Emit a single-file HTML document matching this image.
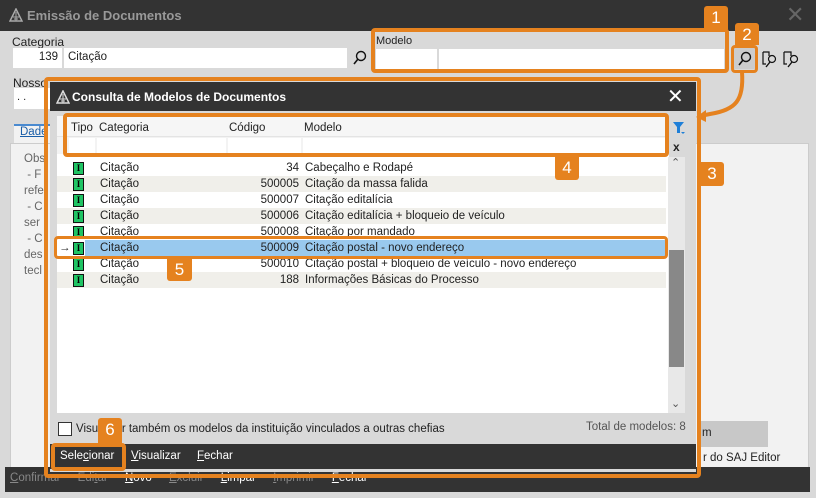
<!DOCTYPE html>
<html><head><meta charset="utf-8"><style>
*{box-sizing:border-box;margin:0;padding:0}
body{width:816px;height:498px;overflow:hidden;background:#d9d9d9;font-family:"Liberation Sans",sans-serif;font-size:11.5px;color:#222;position:relative}
.a{position:absolute}
.dark{background:#333}
.inp{background:#fff;position:absolute}
.or{position:absolute;border:4px solid #e5821f;border-radius:4px}
.badge{position:absolute;background:#e5821f;color:#fff;font-size:17px;text-align:center;border-radius:3px 3px 0 0;line-height:24px}
.row{position:absolute;left:57px;width:609px;height:16px;font-size:11.5px;line-height:16px}
.row span{position:absolute}
.ic{position:absolute;left:16px;top:2px;width:11px;height:13px;background:#1fc464;border:1px solid #111;font:bold 9px "Liberation Serif",serif;color:#000;text-align:center;line-height:11px}
.gtxt{color:#666}
</style></head><body>
<!-- main window -->
<div class="a dark" style="left:0;top:0;width:816px;height:31px"></div>
<svg class="a" style="left:9px;top:8px" width="14" height="14" viewBox="0 0 14 14"><path d="M7 1L1 13H13Z" fill="none" stroke="#aaa" stroke-width="1.5"/><path d="M4 9H10M5 11H9M7 4V13" stroke="#aaa"/></svg>
<div class="a" style="left:27px;top:8px;color:#999;font-size:13px;font-weight:bold">Emissão de Documentos</div>
<div class="a" style="left:786px;top:2px;color:#666;font-size:22px">✕</div>
<div class="a" style="left:12px;top:35px;font-size:12px">Categoria</div>
<div class="inp" style="left:13px;top:48px;width:49px;height:20px;text-align:right;padding:3px 4px">139</div>
<div class="inp" style="left:64px;top:48px;width:283px;height:20px;padding:3px 4px">Citação</div>
<svg class="a" style="left:352px;top:50px" width="16" height="16"><circle cx="9" cy="6" r="4.5" fill="none" stroke="#111" stroke-width="1.4"/><path d="M6 9L2 14" stroke="#111" stroke-width="1.6"/></svg>
<div class="a" style="left:376px;top:35px;font-size:11px">Modelo</div>
<div class="inp" style="left:376px;top:49px;width:61px;height:20px"></div>
<div class="inp" style="left:439px;top:49px;width:285px;height:20px"></div>
<div class="or" style="left:371px;top:28px;width:358px;height:45px"></div>
<div class="a" style="left:734px;top:48px;width:21px;height:21px;background:#ccc"></div>
<svg class="a" style="left:737px;top:51px" width="16" height="16"><circle cx="9" cy="6" r="4.5" fill="none" stroke="#111" stroke-width="1.4"/><path d="M6 9L2 14" stroke="#111" stroke-width="1.6"/></svg>
<div class="or" style="left:731px;top:45px;width:27px;height:28px;border-width:3px"></div>
<svg class="a" style="left:760px;top:48px" width="48" height="22"><path d="M3 4H9V8M3 4V16H6" fill="none" stroke="#111" stroke-width="1.2"/><circle cx="12" cy="11" r="3.5" fill="none" stroke="#111" stroke-width="1.2"/><path d="M10 14L6 19" stroke="#111" stroke-width="1.4"/><path d="M24 4H31V8M24 4V16H27" fill="none" stroke="#111" stroke-width="1.2"/><circle cx="34" cy="11" r="3.5" fill="none" stroke="#111" stroke-width="1.2"/><path d="M32 14L28 19" stroke="#111" stroke-width="1.4"/></svg>
<div class="a" style="left:13px;top:76px;font-size:12px">Nosso</div>
<div class="inp" style="left:14px;top:88px;width:36px;height:21px;padding:3px;font-size:11px">. .</div>
<div class="a" style="left:14px;top:124px;width:36px;height:20px;background:#f2f2f2;border-top:2px solid #4a8ad0"></div>
<div class="a" style="left:20px;top:126px;color:#1a5ea8;text-decoration:underline">Dade</div>
<div class="a" style="left:10px;top:143px;width:799px;height:325px;background:#f2f2f2;border:1px solid #ccc"></div>
<div class="a gtxt" style="left:24px;top:151px;line-height:16px;font-size:11.5px">Obs<br>&nbsp;- F<br>refe<br>&nbsp;- C<br>ser<br>&nbsp;- C<br>des<br>tecl</div>
<div class="a" style="left:700px;top:421px;width:68px;height:26px;background:#c8c8c8;padding:6px 0 0 2px">m</div>
<div class="a" style="left:703px;top:452px">r do SAJ Editor</div>
<div class="a dark" style="left:5px;top:467px;width:805px;height:25px"></div>
<div class="a" style="left:10px;top:472px;color:#888;word-spacing:14px;font-size:11.5px"><u>C</u>onfirmar Edi<u>t</u>ar <span style="color:#fff"><u>N</u>ovo</span> <u>E</u>xcluir <span style="color:#fff"><u>L</u>impar</span> <u>I</u>mprimir <span style="color:#fff"><u>F</u>echar</span></div>
<!-- curved arrow -->
<svg class="a" style="left:690px;top:70px" width="70" height="60"><path d="M52 2C54 30 46 40 20 44L10 46" fill="none" stroke="#e5821f" stroke-width="4"/><path d="M16 40L6 47L16 52Z" fill="#e5821f"/></svg>
<!-- dialog -->
<div class="a" style="left:50px;top:82px;width:646px;height:390px;background:#d9d9d9"></div>
<div class="a dark" style="left:50px;top:82px;width:646px;height:29px"></div>
<svg class="a" style="left:56px;top:90px" width="14" height="14" viewBox="0 0 14 14"><path d="M7 1L1 13H13Z" fill="none" stroke="#ddd" stroke-width="1.5"/><path d="M4 9H10M5 11H9M7 4V13" stroke="#ddd"/></svg>
<div class="a" style="left:72px;top:90px;color:#fff;font-weight:bold;font-size:12px">Consulta de Modelos de Documentos</div>
<div class="a" style="left:667px;top:84px;color:#fff;font-size:20px">✕</div>
<div class="a" style="left:57px;top:116px;width:612px;height:297px;background:#fff"></div>
<div class="a" style="left:57px;top:116px;width:612px;height:21px;background:#f6f6f6;border-bottom:1px solid #e4e4e4"></div>
<div class="a" style="left:71px;top:122px">Tipo</div>
<div class="a" style="left:99px;top:122px">Categoria</div>
<div class="a" style="left:229px;top:122px">Código</div>
<div class="a" style="left:304px;top:122px">Modelo</div>
<div class="a" style="left:57px;top:137px;width:612px;height:17px;background:#f3f3f3"></div>
<div class="a" style="left:69px;top:138px;width:26px;height:15px;background:#fff"></div>
<div class="a" style="left:97px;top:138px;width:129px;height:15px;background:#fff"></div>
<div class="a" style="left:228px;top:138px;width:73px;height:15px;background:#fff"></div>
<div class="a" style="left:303px;top:138px;width:364px;height:15px;background:#fff"></div>
<div class="a" style="left:669px;top:116px;width:27px;height:297px;background:#d9d9d9"></div>
<svg class="a" style="left:672px;top:121px" width="14" height="14"><path d="M1 1H12L8 6V12H5V6Z" fill="#1e7fd8"/><path d="M9 11L13 11L11 13Z" fill="#1e7fd8"/></svg>
<div class="a" style="left:673px;top:140px;font-weight:bold;font-size:12px">x</div>
<div class="or" style="left:63px;top:113px;width:606px;height:44px"></div>

<div class="row" style="top:160px;background:#fff"><div class="ic">I</div><span style="left:43px">Citação</span><span style="right:367px">34</span><span style="left:248px">Cabeçalho e Rodapé</span></div>
<div class="row" style="top:176px;background:#f0efea"><div class="ic">I</div><span style="left:43px">Citação</span><span style="right:367px">500005</span><span style="left:248px">Citação da massa falida</span></div>
<div class="row" style="top:192px;background:#fff"><div class="ic">I</div><span style="left:43px">Citação</span><span style="right:367px">500007</span><span style="left:248px">Citação editalícia</span></div>
<div class="row" style="top:208px;background:#f0efea"><div class="ic">I</div><span style="left:43px">Citação</span><span style="right:367px">500006</span><span style="left:248px">Citação editalícia + bloqueio de veículo</span></div>
<div class="row" style="top:224px;background:#fff"><div class="ic">I</div><span style="left:43px">Citação</span><span style="right:367px">500008</span><span style="left:248px">Citação por mandado</span></div>
<div class="row" style="top:240px;background:#99c9ee"><span style="left:0;width:28px;height:16px;background:#fff;padding-left:2px">→</span><div class="ic">I</div><span style="left:43px">Citação</span><span style="right:367px">500009</span><span style="left:248px">Citação postal - novo endereço</span></div>
<div class="row" style="top:256px;background:#fff"><div class="ic">I</div><span style="left:43px">Citação</span><span style="right:367px">500010</span><span style="left:248px">Citação postal + bloqueio de veículo - novo endereço</span></div>
<div class="row" style="top:272px;background:#f0efea"><div class="ic">I</div><span style="left:43px">Citação</span><span style="right:367px">188</span><span style="left:248px">Informações Básicas do Processo</span></div>

<div class="a" style="left:668px;top:157px;width:17px;height:256px;background:#e8e8e8"></div>
<div class="a" style="left:669px;top:250px;width:15px;height:117px;background:#888"></div>
<div class="a" style="left:671px;top:156px;font-size:11px;color:#555">⌃</div>
<div class="a" style="left:671px;top:397px;font-size:11px;color:#555">⌄</div>
<div class="or" style="left:54px;top:236px;width:614px;height:23px;border-width:3px"></div>

<div class="a" style="left:58px;top:422px;width:14px;height:14px;background:#fff;border:1.5px solid #333"></div>
<div class="a" style="left:76px;top:423px">Visualizar também os modelos da instituição vinculados a outras chefias</div>
<div class="a" style="left:586px;top:421px;color:#555">Total de modelos: 8</div>
<div class="a dark" style="left:50px;top:444px;width:646px;height:25px"></div>
<div class="a" style="left:60px;top:450px;color:#fff">Sele<u>c</u>ionar</div>
<div class="a" style="left:131px;top:450px;color:#fff"><u>V</u>isualizar</div>
<div class="a" style="left:197px;top:450px;color:#fff"><u>F</u>echar</div>
<div class="or" style="left:51px;top:443px;width:75px;height:28px"></div>
<div class="or" style="left:44px;top:77px;width:657px;height:401px;border-width:4px"></div>
<div class="badge" style="left:704px;top:6px;width:24px;height:23px">1</div>
<div class="badge" style="left:735px;top:23px;width:24px;height:22px">2</div>
<div class="badge" style="left:555px;top:156px;width:24px;height:24px;border-radius:0 0 3px 3px">4</div>
<div class="badge" style="left:167px;top:258px;width:25px;height:23px;border-radius:0 0 3px 3px">5</div>
<div class="badge" style="left:98px;top:418px;width:24px;height:25px">6</div>
<div class="badge" style="left:700px;top:162px;width:24px;height:24px;border-radius:0 3px 3px 0">3</div>
</body></html>
